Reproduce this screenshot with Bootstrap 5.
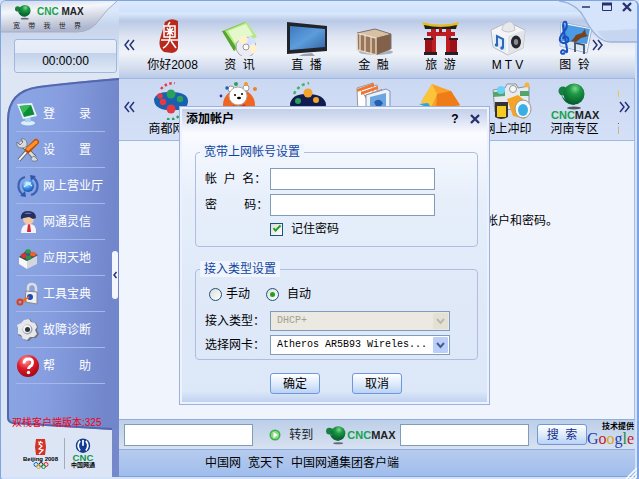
<!DOCTYPE html>
<html lang="zh-CN">
<head>
<meta charset="utf-8">
<meta name="viewport" content="width=device-width, initial-scale=1">
<title>CNCMAX 宽带我世界</title>
<link href="https://cdn.jsdelivr.net/npm/bootstrap@5.3.0/dist/css/bootstrap.min.css" rel="stylesheet">
<style>
body{font-family:"Liberation Sans","Noto Sans CJK SC",sans-serif;font-size:12px;line-height:18px;color:#000;background:#d3e1f7}
a{color:inherit;text-decoration:none}
.client{min-height:100vh;border:1px solid #7ea4e2;border-width:1px 2px 2px 1px;border-radius:6px 6px 4px 4px;padding:0 2px 2px 0;background:#d3e2f8;overflow:hidden}
.backdrop{position:absolute;inset:0;width:100%;height:100%}
.side{width:118px;background:linear-gradient(#dbe8fb 0,#dbe8fb 10px,#c6d4ec 24px,#dfe6f3 70px,#dce5f5 100%)}
.brand-box{height:36px;padding:3px 0 0 12px}
.brand-shape{position:absolute;left:0;top:0;width:118px;height:32px}
.wordmark{font-size:11px;line-height:14px;font-weight:700;color:#222}
.wordmark b{color:#16a34c}
.brand-box .wordmark{font-size:10px}
.slogan{font-size:7px;line-height:12px;color:#222;width:68px}
.timer{margin:2px 2px 5px 13px;height:34px;border:1px solid #9fb9de;border-radius:3px;background:linear-gradient(#e9eff9 0,#e3ebf7 40%,#c3d2ea 42%,#dfe8f6 100%);padding-top:12px}
.menu-box{padding:18px 14px 0 15px}
.menu-link{height:36px;gap:3px;color:#fff;border-bottom:1px solid #a5b8ea;white-space:nowrap}
.menu-link svg{width:24px;height:24px}
.version{font-size:10px;line-height:14px;color:#f00010;margin:32px -14px 0 -4px;white-space:nowrap}
.handle{position:absolute;right:1px;top:250px;width:6px;height:48px;border:0;border-radius:3px;background:#f3f6fe;padding:0}
.handle svg{display:block;width:6px;height:8px}
.partners{height:47px;padding:8px 0 0 22px;background:linear-gradient(90deg,transparent 111px,#7488ca 111px)}
.partner-row{width:72px}
.p-name{font-size:6px;line-height:6px;font-weight:700;white-space:nowrap}
.strip-a{height:77px;padding:17px 0 0 4px;background:linear-gradient(#dceafd 0,#cfe1fa 11px,#dceafd 12px,#b9c9e6 20px,#dfe5f2 36px,#f0f3f9 52px,#d6dfef 66px,#b9cae7 100%)}
.strip-b{height:63px;padding:3px 3px 0 4px;border:1px solid #9eb8e6;border-left:0;background:linear-gradient(#cbd8f2,#d4e0f6)}
.chev{width:12px;height:20px;border:0;background:none;padding:0;margin-top:17px}
.strip-b .chev{margin-top:15px}
.chev svg{display:block;width:12px;height:12px}
.tile{width:67px;text-align:center;white-space:nowrap}
.tile svg{display:block;width:40px;height:38px;margin:0 auto}
.strip-b .tile svg{width:54px;height:38px}
.end-a{margin-left:-16px;margin-right:32px}
.controls{position:absolute;right:0;top:0;width:80px;height:44px}
.controls .shape{position:absolute;inset:0}
.ctl{border:0;background:none;padding:0;width:12px;height:12px}
.ctl svg{display:block;width:12px;height:12px}
.canvas{background:#f0f4fd;border-right:1px solid #a9bdea;padding:71px 76px 0 0}
.searchbar{height:30px;padding:0 1px 0 5px;border-top:1px solid #8fadde;background:linear-gradient(#bdcfe9,#d7e1f0)}
.line-input{border:1px solid #7f9db9;border-radius:0;height:22px;min-width:0;padding:1px 6px;font-size:12px;background:#fff;box-shadow:none}
.line-input:focus{border-color:#7f9db9;box-shadow:none}
.go-btn{font-size:12px;line-height:18px}
.blue-btn{border:1px solid #6f98da;border-radius:3px;height:21px;width:50px;padding:0;font-size:12px;line-height:18px;color:#000;background:linear-gradient(#fff,#dce9fb 55%,#b9d2f6)}
.search-btn{color:#12318c}
.credit{width:47px;line-height:9px}
.credit-top{font-size:8px;font-weight:700;line-height:9px}
.google{font-family:"Liberation Serif",serif;font-size:16px;line-height:16px}
.g-blue{color:#1c3fae}.g-red{color:#c4202c}.g-gold{color:#d9a514}.g-green{color:#1c8a35}
.footer-bar{height:28px;gap:7px;padding:4px 0 0 86px;border-top:1px solid #8fadde;background:linear-gradient(#b7cbee,#9fbdec);border-bottom:1px solid #7f9fdc;white-space:nowrap}
.grip{position:absolute;right:0;bottom:0;width:12px;height:12px}
.dialog-win{position:absolute;left:179px;top:106px;width:311px;border:1px solid #9fb0e0;background:linear-gradient(#bfcbe8 0,#d3dcf0 10px,#fafbff 26px,#f6f9fe 36px,#e7effb 90px,#dfe9f8 180px,#dce7f8 284px,#bccff0 100%);box-shadow:inset 0 0 0 2px #edf3fd;padding-bottom:10px}
.win-head{height:24px;padding:0 8px 0 6px;font-weight:700}
.win-body{padding:13px 11px 0 15px}
.group{border:1px solid #b0bde2;border-radius:4px;padding:0 8px 0 9px;margin-bottom:14px}
.group legend{float:none;width:auto;font-size:12px;line-height:16px;color:#10459f;background:#f0f5fd;padding:0 4px;margin:0 0 0 -5px}
.field-label{width:65px;flex:none;white-space:nowrap}
.text-w{width:165px}
.pick-w{width:180px}
.tick{appearance:none;width:13px;height:13px;border:1px solid #1c5180;background:linear-gradient(135deg,#dcdcd7,#fff);margin:0;display:inline-grid;place-content:center}
.tick:checked::before{content:"";width:8px;height:4px;border:solid #21a121;border-width:0 0 2px 2px;transform:rotate(-45deg) translate(1px,-1px)}
.dot{border-radius:50%}
.dot:checked::before{width:5px;height:5px;border:0;border-radius:50%;background:#21a121;transform:none}
.pick{appearance:none;height:20px;border:1px solid #7f9db9;border-radius:0;background:#fff;padding:0 6px;font:10px/18px "Liberation Mono",monospace;color:#000;width:100%}
.pick:disabled{background:#ebe9e1;color:#a0a094;opacity:1}
.pick-arrow{position:absolute;right:2px;top:2px;width:15px;height:16px;pointer-events:none}
.actions{gap:32px;padding-left:75px;margin-top:-1px}
</style>
<script src="https://cdn.jsdelivr.net/npm/bootstrap@5.3.0/dist/js/bootstrap.bundle.min.js"></script>
</head>
<body>
<svg width="0" height="0" class="position-absolute" aria-hidden="true">
<defs>
<radialGradient id="gGreen" cx=".55" cy=".25" r=".75"><stop offset="0" stop-color="#7fd68e"/><stop offset=".35" stop-color="#1c9a45"/><stop offset="1" stop-color="#045a2c"/></radialGradient>
<radialGradient id="gRed" cx=".4" cy=".25" r=".8"><stop offset="0" stop-color="#ff9a9a"/><stop offset=".5" stop-color="#dd1a28"/><stop offset="1" stop-color="#9c0412"/></radialGradient>
<radialGradient id="gBlue" cx=".4" cy=".3" r=".8"><stop offset="0" stop-color="#d8f4ff"/><stop offset=".5" stop-color="#3a90e8"/><stop offset="1" stop-color="#123e9c"/></radialGradient>
<linearGradient id="gTv" x2="1" y2="1"><stop offset="0" stop-color="#3f78c0"/><stop offset=".5" stop-color="#5d9ddb"/><stop offset="1" stop-color="#3467a8"/></linearGradient>
<linearGradient id="gPanel" x2="1" y2=".15"><stop offset="0" stop-color="#8ba7e5"/><stop offset=".45" stop-color="#879fe0"/><stop offset="1" stop-color="#7186cb"/></linearGradient>
<linearGradient id="gBrand" x2=".3" y2="1"><stop offset="0" stop-color="#cdd6e8"/><stop offset=".35" stop-color="#f4f6fa"/><stop offset="1" stop-color="#aeb5cc"/></linearGradient>
<symbol id="ball" viewBox="0 0 20 18"><circle cx="4" cy="5.500" r="3" fill="#17803e"/><circle cx="12" cy="7.500" r="6.500" fill="url(#gGreen)"/><path d="M4 7q3 5 8 4l5-1-4 4q-5 1-8-4z" fill="#0a6a34"/><ellipse cx="12" cy="16.500" rx="4.500" ry="1" fill="#667"/></symbol>
<symbol id="left2" viewBox="0 0 12 12"><path d="M6 1L2 6l4 5M11 1L7 6l4 5" fill="none" stroke="#26347c" stroke-width="1.500"/></symbol>
<symbol id="right2" viewBox="0 0 12 12"><path d="M1 1l4 5-4 5M6 1l4 5-4 5" fill="none" stroke="#26347c" stroke-width="1.500"/></symbol>
<symbol id="close" viewBox="0 0 12 12"><path d="M2 2l8 8M10 2l-8 8" stroke="#26306e" stroke-width="2.300"/></symbol>
</defs>
</svg>

<div class="client d-flex position-relative">
  <aside class="side d-flex flex-column flex-shrink-0 position-relative">
    <div class="brand-box position-relative">
      <svg class="brand-shape" viewBox="0 0 118 32"><path d="M0 0H116Q106 8 98 19Q90 31 76 31H0z" fill="url(#gBrand)"/><path d="M116 0Q106 8 98 19Q90 31 76 31H0" fill="none" stroke="#a5adc8"/></svg>
      <div class="position-relative d-flex align-items-center gap-1">
        <svg width="20" height="16"><use href="#ball"/></svg>
        <span class="wordmark"><b>CNC</b> MAX</span>
      </div>
      <div class="slogan position-relative d-flex justify-content-between"><span>宽</span><span>带</span><span>我</span><span>世</span><span>界</span></div>
    </div>
    <div class="timer text-center">00:00:00</div>
    <nav class="menu-box position-relative flex-grow-1">
      <svg class="backdrop" viewBox="0 0 118 352" preserveAspectRatio="none"><path d="M6 340V42Q7 12 38 8Q70 4 118 0V352H111L12 346Q6 345 6 340z" fill="url(#gPanel)"/><path d="M118 1Q70 5 38 9Q7 13 7 42V339Q7 344 12 345L111 351" fill="none" stroke="#5466ae" stroke-width="2"/></svg>
      <div class="position-relative">
        <a class="menu-link d-flex align-items-center" href="#"><svg viewBox="0 0 24 24"><ellipse cx="12" cy="21" rx="7" ry="2.500" fill="#d9f0fb"/><path d="M9 14l5-1 1 7H9z" fill="#a9d3ea"/><path d="M1 2l15-1 5 13-14 3z" fill="#e6f1fb"/><path d="M3.500 4L15 3l3.500 9.500L8 15z" fill="#0b8d34"/><path d="M3.500 4L15 3l-8 9z" fill="#36b957"/></svg>登　　录</a>
        <a class="menu-link d-flex align-items-center" href="#"><svg viewBox="0 0 24 24"><path d="M4 4l15 16" stroke="#555" stroke-width="4.500"/><path d="M4 4l15 16" stroke="#ddd" stroke-width="3"/><path d="M1 4l3 3 3-3-2-3q5-1 6 4t-5 5-5-6M22 22l-4-4-3 2q0 4 5 3z" fill="#d6d9dd" stroke="#555" stroke-width=".6"/><path d="M3 22L12 12" stroke="#555" stroke-width="3.500"/><path d="M3 22L12 12" stroke="#f0f0f0" stroke-width="2"/><path d="M12 12L20 4" stroke="#bb4a00" stroke-width="6" stroke-linecap="round"/><path d="M12 11L20 4" stroke="#ff922b" stroke-width="3.500" stroke-linecap="round"/></svg>设　　置</a>
        <a class="menu-link d-flex align-items-center" href="#"><svg viewBox="0 0 24 24"><circle cx="12" cy="12" r="6" fill="url(#gBlue)"/><path d="M9 3Q2 5 2.500 13q.5 5 5 8M15 21q7-2 6.500-10-.5-5-5-8" fill="none" stroke="#3a62b4" stroke-width="2.200"/><path d="M4 22l6 1-1-6zM20 2l-6-1 1 6z" fill="#2f58ad"/><path d="M8 13q4-5 8-1M10 9l5 0" fill="none" stroke="#c8eeff" stroke-width="1.300"/></svg>网上营业厅</a>
        <a class="menu-link d-flex align-items-center" href="#"><svg viewBox="0 0 24 24"><path d="M5 23q0-9 8-9t7 9z" fill="#f3f3f8"/><path d="M12 14h2l1 8h-4z" fill="#d72a33"/><circle cx="12.500" cy="9" r="5.500" fill="#f3c6a4"/><path d="M5 9Q4 1 12 1t8 7l-3 1-4-2-5 1z" fill="#26305e"/><path d="M8 4q4-3 8 0z" fill="#6576b8"/></svg>网通灵信</a>
        <a class="menu-link d-flex align-items-center" href="#"><svg viewBox="0 0 24 24"><path d="M3 11l8 4v8l-8-5z" fill="#f7f7f7"/><path d="M11 15l10-5v8l-10 5z" fill="#d3d6dc"/><path d="M3 11l8-7 11 5-11 6z" fill="#4b4b50"/><ellipse cx="8" cy="9.500" rx="3" ry="2.300" fill="#d9342b"/><ellipse cx="12" cy="5.500" rx="2.800" ry="2.300" fill="#2a9d3d"/><ellipse cx="12.500" cy="11.500" rx="3" ry="2.300" fill="#2f8e44"/><ellipse cx="17" cy="8" rx="3" ry="2.300" fill="#e8642c"/><circle cx="12" cy="8.500" r="1.500" fill="#2f58c4"/></svg>应用天地</a>
        <a class="menu-link d-flex align-items-center" href="#"><svg viewBox="0 0 24 24"><path d="M12 10V6q0-4 4-4t4 5v3" fill="none" stroke="#ddd" stroke-width="2.500"/><path d="M10 9l11 1v12l-12-2z" fill="#edf0f5" stroke="#888"/><circle cx="14" cy="15" r="3" fill="#234ab4"/><path d="M13 15l-7 4M9 17l1 3" stroke="#ef6a1e" stroke-width="2"/><circle cx="4" cy="20" r="2.500" fill="none" stroke="#df3f16" stroke-width="2"/></svg>工具宝典</a>
        <a class="menu-link d-flex align-items-center" href="#"><svg viewBox="0 0 24 24"><path d="M9 2l5-1 2 3 4 1 2 4-1 3 2 4-3 4-4 0-3 3-5-1-2-3-4-2 0-5-1-4 4-3z" fill="#71757e"/><path d="M8 2l5-1 2 3 4 1 2 4-2 3 2 4-3 3-4 0-3 3-4-1-2-4-3-1 0-5-1-4 4-2z" fill="#e6e8eb"/><circle cx="11.500" cy="11.500" r="5" fill="#9ea3ad"/><circle cx="11" cy="11" r="4" fill="#f4f4f6"/><circle cx="11.500" cy="11.500" r="2.500" fill="#30343c"/></svg>故障诊断</a>
        <a class="menu-link d-flex align-items-center" href="#"><svg viewBox="0 0 24 24"><circle cx="12" cy="12" r="11" fill="url(#gRed)"/><path d="M8 9.500q0-4.500 4.500-4.500t4 4q0 2-2.500 3.500-1.500 1-1.500 2.500" fill="none" stroke="#fff" stroke-width="2.800"/><circle cx="12.500" cy="18.500" r="1.700" fill="#fff"/></svg>帮　　助</a>
        <div class="version">双栈客户端版本:325</div>
      </div>
    </nav>
    <div class="partners">
      <div class="partner-row d-flex justify-content-between">
        <div class="d-flex flex-column align-items-center"><svg width="18" height="18" viewBox="0 0 18 18"><path d="M4 1h9l1 8-1 8H4L3 9z" fill="#d53125"/><path d="M9 3L7 6l3 2-3 3 4 1-4 4M6 4l5 1" fill="none" stroke="#fff" stroke-width="1.200"/></svg><span class="p-name">Beijing 2008</span><svg width="16" height="7" viewBox="0 0 16 7" fill="none"><circle cx="3" cy="2.500" r="2" stroke="#16c"/><circle cx="8" cy="2.500" r="2" stroke="#222"/><circle cx="13" cy="2.500" r="2" stroke="#d22"/><circle cx="5.500" cy="4.500" r="2" stroke="#da2"/><circle cx="10.500" cy="4.500" r="2" stroke="#194"/></svg></div>
        <div class="vr"></div>
        <div class="d-flex flex-column align-items-center"><svg width="22" height="24" viewBox="0 0 22 25"><circle cx="11" cy="8" r="7.500" fill="#143c8e"/><path d="M8 3Q4 8 8 13M14 3q4 5 0 10M11 2v6" stroke="#fff" stroke-width="1.800" fill="none"/><text x="11" y="24" text-anchor="middle" font-family="Liberation Sans, sans-serif" font-size="10" font-weight="700" fill="#12964a">CNC</text></svg><span class="p-name">中国网通</span></div>
      </div>
    </div>
    <button class="handle" type="button" aria-label="收起"><svg viewBox="0 0 6 8"><path d="M4.500 1L2 4l2.500 3" fill="none" stroke="#26347c" stroke-width="1.500"/></svg></button>
  </aside>

  <main class="d-flex flex-column flex-grow-1 overflow-hidden position-relative">
    <div class="strip-a d-flex">
      <button class="chev me-1" type="button" aria-label="向左"><svg><use href="#left2"/></svg></button>
      <div class="d-flex flex-grow-1 justify-content-between">
        <a class="tile" href="#"><svg viewBox="0 0 40 38"><path d="M12 4Q18-1 25 3L25 20l0 9q0 5-6 6l-8-1q-6-4-4-13z" fill="#b92a1c"/><path d="M17 4l-2 3M11 8h11v11H11zM17 8v11M12 13.500h9M14 10l6 7M20 10l-6 7M8 22h17M17 19q-1 8-7 11M18 23l5 7" fill="none" stroke="#fff" stroke-width="1.500"/></svg>你好2008</a>
        <a class="tile" href="#"><svg viewBox="0 0 40 38"><path d="M2 13L25 4l11 14-22 15z" fill="#7fc94c"/><path d="M5 13L27 4l10 15-21 10z" fill="#b5e883"/><path d="M8 13L26 6l7 11-18 8z" fill="#e4f9cb"/><path d="M2 13l3 0 11 16-2 4z" fill="#56a332"/><circle cx="26" cy="29" r="10" fill="#ececf4" stroke="#aaa"/><path d="M26 29L18 22q4-5 9-4zM26 29l8 7q4-5 3-9z" fill="#fff1c8"/><path d="M26 29l10-5q-2-5-7-6z" fill="#d5e2ff"/><circle cx="26" cy="29" r="3" fill="#fff" stroke="#999"/></svg>资&nbsp; 讯</a>
        <a class="tile" href="#"><svg viewBox="0 0 40 38"><path d="M0 4l40 4v25L0 36z" fill="#20242b"/><path d="M3 8l35 3v18L3 32z" fill="url(#gTv)"/><path d="M12 38h16l-3-3-9 1z" fill="#9da3b0"/></svg>直&nbsp; 播</a>
        <a class="tile" href="#"><svg viewBox="0 0 40 38"><ellipse cx="22" cy="34" rx="17" ry="3" fill="#aab2c2"/><path d="M3 15l18-4 16 5v15l-15 6-18-4z" fill="#9b7656"/><path d="M3 15l18-4 16 5-15 4z" fill="#d9c0a2"/><path d="M22 20l15-4v15l-15 6z" fill="#82614a"/><path d="M6 15v17M11 17v17M17 18v18M3 15v17l19 5V20z" fill="none" stroke="#e7ddd0" stroke-width="1.300"/><path d="M3 15l18-4 16 5v15" fill="none" stroke="#777"/></svg>金&nbsp; 融</a>
        <a class="tile" href="#"><svg viewBox="0 0 40 38"><path d="M1 4q19 5 37 0l-2 5H3z" fill="#e5bd18"/><path d="M3 7q17 4 33 0l-1 4H4z" fill="#202022"/><path d="M10 11h5v23h-5zM25 11h5v23h-5zM6 14h28v4H6z" fill="#bd1c20"/><path d="M4 22h7v13H4zM29 22h7v13h-7zM18 10h3v5h-3z" fill="#9c1118"/><path d="M3 34h13v3H3zM24 34h13v3H24zM3 20h9v2H3zM28 20h9v2h-9z" fill="#2a1c22"/></svg>旅&nbsp; 游</a>
        <a class="tile" href="#"><svg viewBox="0 0 40 38"><path d="M3 12L20 4l17 8-2 18-15 7-15-8z" fill="#f5f5f7" stroke="#b4b8c0"/><path d="M20 18l17-6-2 18-15 7z" fill="#e2e4e8"/><ellipse cx="28" cy="24" rx="5" ry="6.500" fill="#25272c"/><ellipse cx="28" cy="24" rx="2.200" ry="3" fill="#868b96"/><path d="M14 12q0-6 6-8t7 8q-7 4-13 0z" fill="#e8e9ed" stroke="#c3c6cc"/><path d="M5 16l13 5v13L7 28z" fill="#dcebfa"/><path d="M9 27V18l6 3v9" fill="none" stroke="#2b68bc" stroke-width="2"/><circle cx="8.500" cy="27" r="1.800" fill="#2b68bc"/><circle cx="14" cy="30" r="1.800" fill="#2b68bc"/></svg>M T V</a>
        <a class="tile" href="#"><svg viewBox="0 0 40 38"><path d="M6 4l31 6-5 25-27-7z" fill="#f8fbff" stroke="#9ab5d8"/><path d="M8 6l27 5-3 15-26-3z" fill="#4a9ae4"/><path d="M7 23l25 4-1 6-25-5z" fill="#d8e7f1"/><path d="M21 17l6-2 3-4 1 5 2 2-7 2-5 4-5-1 3-3z" fill="#7a4317"/><path d="M10 35q-4 2-4-1 1-3 4-1 3 3 2-2L8 8q0-5 3-4 3 5-4 12-5 7 1 9 7 0 5-5-4-4-5 1" fill="none" stroke="#1c4fc0" stroke-width="2"/><path d="M20 34V25l9 2v9" fill="none" stroke="#3b4560" stroke-width="1.700"/></svg>图&nbsp; 铃</a>
      </div>
      <button class="chev end-a" type="button" aria-label="向右"><svg><use href="#right2"/></svg></button>
    </div>
    <div class="strip-b d-flex">
      <button class="chev me-1" type="button" aria-label="向左"><svg><use href="#left2"/></svg></button>
      <div class="d-flex flex-grow-1 overflow-hidden">
        <a class="tile flex-shrink-0" href="#"><svg viewBox="0 0 54 38"><path d="M8 17q3-8 16-7 18 0 18 9 0 10-15 9-19 1-19-11z" fill="#1960ae"/><circle cx="25" cy="12" r="4.500" fill="#2ba05a"/><circle cx="34" cy="17" r="3.200" fill="#2ba05a"/><circle cx="14" cy="14" r="2.800" fill="#e73943"/><circle cx="17" cy="20" r="3.200" fill="#e73943"/><circle cx="25" cy="27" r="4.500" fill="#e73943"/><path d="M15 7q5-6 14-6" fill="none" stroke="#e73943" stroke-width="2.500" stroke-dasharray="2.500 2.500"/><path d="M21 37q8 2 14-5" fill="none" stroke="#2ba05a" stroke-width="2.500" stroke-dasharray="2.500 2.500"/></svg>商都网景</a>
        <a class="tile flex-shrink-0" href="#"><svg viewBox="0 0 54 38"><circle cx="26" cy="23" r="16" fill="#ef6621"/><path d="M17 38q-2-12 9-14 11 2 9 14z" fill="#fff"/><circle cx="18" cy="7" r="3" fill="#fff" stroke="#999"/><circle cx="33" cy="6" r="3" fill="#fff" stroke="#999"/><ellipse cx="25" cy="14" rx="9" ry="9" fill="#fff" stroke="#aaa"/><circle cx="22" cy="13" r="1"/><circle cx="29" cy="12" r="1"/><ellipse cx="26" cy="16" rx="2" ry="1.300"/><path d="M20 23q6 3 12-1l2 9-4-4-10-1z" fill="#de262c"/><circle cx="23" cy="2" r="2" fill="#2ba05a"/><circle cx="33" cy="2" r="2" fill="#f59a22"/><circle cx="14" cy="6" r="1.700" fill="#1960ae"/><circle cx="42" cy="7" r="2" fill="#f58022"/><circle cx="8" cy="14" r="1.400" fill="#4a2b9c"/></svg>奥运频道</a>
        <a class="tile flex-shrink-0" href="#"><svg viewBox="0 0 54 38"><path d="M10 22q2-11 18-10 16 0 18 10 0 14-18 14T10 22z" fill="#111c50"/><circle cx="28" cy="11" r="4.500" fill="#f5a32a"/><circle cx="18" cy="19" r="3" fill="#2ba05a"/><circle cx="36" cy="18" r="3" fill="#f5a32a"/><path d="M14 12q4-9 15-11" fill="none" stroke="#45b16a" stroke-width="2.500" stroke-dasharray="3 3"/></svg>星空影院</a>
        <a class="tile flex-shrink-0" href="#"><svg viewBox="0 0 54 38"><path d="M10 6l16-5v34l-15-1zM14 8l16-5v30z" fill="#fff" stroke="#999"/><path d="M10 7l17-6v3l-17 6zM14 10l17-6v3l-17 6zM18 13l17-6v3l-17 6z" fill="#f37532"/><path d="M19 13l20-6 4 2v28H19z" fill="#eef3fb" stroke="#8093b5"/><path d="M23 15l16-4v22H23z" fill="#6ca5df"/><path d="M27 20q5-5 9 1l-5 7z" fill="#245fae"/><path d="M32 24l12 2-4 6z" fill="#f5a32a"/></svg>电子相册</a>
        <a class="tile flex-shrink-0" href="#"><svg viewBox="0 0 54 38"><path d="M7 20L18 2l19 7 9 14-20 13z" fill="#f9a12a"/><path d="M7 20L18 2l5 10-7 16z" fill="#fbc43b"/><path d="M23 12l14-3 9 14-24 4z" fill="#ee7d19"/><path d="M5 22l9-1 5 7z" fill="#28a7dc"/></svg>生活天地</a>
        <a class="tile flex-shrink-0" href="#"><svg viewBox="0 0 54 38"><path d="M12 8l12-2 2-4h9l2 4 11-2v20l-34 6z" fill="#e7eaee" stroke="#8b929e"/><path d="M12 10l12-1v5l-12 1zM39 9h9v5h-9z" fill="#55a46b"/><path d="M26 17l11-4 11 9-4 15-12-3z" fill="#f6a425"/><ellipse cx="42" cy="27" rx="8" ry="9" fill="#f4f6f8" stroke="#999"/><ellipse cx="42" cy="28" rx="5" ry="6" fill="#3baee6"/><circle cx="20" cy="8" r="4" fill="#6bd2f5"/><circle cx="32" cy="7" r="3.500" fill="#f8f9fa" stroke="#999"/><circle cx="46" cy="3" r="2.500" fill="#f5b33a"/><path d="M14 20h13v15q-7 4-13 0z" fill="#343437"/><path d="M16 24h9v11h-9z" fill="#f5cb20"/></svg>网上冲印</a>
        <a class="tile flex-shrink-0" href="#"><svg viewBox="0 0 54 38"><circle cx="15" cy="9" r="4.500" fill="#17803e"/><path d="M13 12q4 8 12 8l9-3-8 6q-10 0-13-11z" fill="#0a6a34"/><circle cx="26" cy="12" r="10.500" fill="url(#gGreen)"/><ellipse cx="26" cy="26" rx="7" ry="1.500" fill="#556"/><text x="3" y="37" font-family="Liberation Sans, sans-serif" font-size="11" font-weight="700" fill="#16a34c">CNC<tspan fill="#222">MAX</tspan></text></svg>河南专区</a>
        <a class="tile flex-shrink-0" href="#"><svg viewBox="0 0 54 38"><circle cx="11" cy="12" r="8" fill="#f6c12c"/><path d="M5 24q6-11 12 0v8H5z" fill="#26a5d9"/></svg>商务中心</a>
      </div>
      <button class="chev" type="button" aria-label="向右"><svg><use href="#right2"/></svg></button>
    </div>
    <section class="canvas flex-grow-1 text-end">请输入您的帐户和密码。</section>
    <form class="searchbar d-flex align-items-center" onsubmit="return false">
      <input class="line-input form-control flex-fill w-25" type="text" aria-label="网址">
      <button class="go-btn btn p-0 border-0 d-flex align-items-center ms-3 me-2 text-nowrap" type="submit"><svg class="me-2" width="12" height="12" viewBox="0 0 12 12"><circle cx="6" cy="6" r="5.500" fill="#3cae4b"/><circle cx="6" cy="6" r="4" fill="#8bd981"/><path d="M4.500 3L9 6 4.500 9z" fill="#fff"/></svg>转到</button>
      <svg class="ms-1 flex-shrink-0" width="22" height="20"><use href="#ball"/></svg><span class="wordmark me-1"><b>CNC</b>MAX</span>
      <input class="line-input form-control flex-fill w-25" type="text" aria-label="搜索内容">
      <button class="blue-btn search-btn flex-shrink-0 ms-2" type="submit">搜&nbsp; 索</button>
      <div class="credit flex-shrink-0"><div class="credit-top text-end">技术提供</div><div class="google"><span class="g-blue">G</span><span class="g-red">o</span><span class="g-gold">o</span><span class="g-blue">g</span><span class="g-green">l</span><span class="g-red">e</span></div></div>
    </form>
    <footer class="footer-bar d-flex"><a href="#">中国网</a><a href="#">宽天下</a><a href="#">中国网通集团客户端</a></footer>
  </main>

  <div class="controls">
    <svg class="shape" width="80" height="44" viewBox="0 0 80 44"><path d="M6 0q14 2 22 18 12 23 26 23h26V0z" fill="#d5e4fa"/><path d="M40 30q8 11 16 11h24V28z" fill="#bccbe9" opacity=".6"/><path d="M2 0q18 2 26 18 12 23 26 23h26" fill="none" stroke="#9db2da" stroke-width="1.500"/></svg>
    <div class="position-relative d-flex justify-content-end gap-2 pe-1">
      <button class="ctl" type="button" aria-label="最小化"><svg viewBox="0 0 12 12"><path d="M1 6h8" stroke="#26306e" stroke-width="1.500"/></svg></button>
      <button class="ctl" type="button" aria-label="最大化"><svg viewBox="0 0 12 12"><path d="M1.500 2.500h9v7h-9z" fill="none" stroke="#26306e"/><path d="M1 3h10" stroke="#26306e" stroke-width="3"/></svg></button>
      <button class="ctl" type="button" aria-label="关闭"><svg><use href="#close"/></svg></button>
    </div>
  </div>
  <svg class="grip" viewBox="0 0 12 12"><path d="M1 12L12 1M5 12l7-7M9 12l3-3" stroke="#fff" stroke-width="1.500"/></svg>
</div>

<div class="dialog-win" role="dialog" aria-labelledby="dlgTitle">
  <div class="win-head d-flex align-items-center"><span id="dlgTitle" class="me-auto">添加帐户</span>
    <button class="ctl me-2 fw-bold lh-1" type="button" aria-label="帮助">?</button>
    <button class="ctl" type="button" aria-label="关闭"><svg><use href="#close"/></svg></button>
  </div>
  <form class="win-body" onsubmit="return false">
    <fieldset class="group">
      <legend>宽带上网帐号设置</legend>
      <div class="d-flex align-items-center mt-2"><label class="field-label" for="acc">帐&nbsp; 户&nbsp; 名：</label><input id="acc" class="line-input form-control text-w" type="text" autofocus></div>
      <div class="d-flex align-items-center mt-1"><label class="field-label" for="pwd">密　　&nbsp;码：</label><input id="pwd" class="line-input form-control text-w" type="password"></div>
      <div class="d-flex align-items-center my-1 pb-1"><span class="field-label"></span><input id="keep" class="tick" type="checkbox" checked><label class="ps-1 ms-1" for="keep">记住密码</label></div>
    </fieldset>
    <fieldset class="group">
      <legend>接入类型设置</legend>
      <div class="d-flex align-items-center mt-2 ps-1"><input id="man" class="tick dot" type="radio" name="mode"><label class="ps-1 me-3" for="man">手动</label><input id="auto" class="tick dot" type="radio" name="mode" checked><label class="ps-2" for="auto">自动</label></div>
      <div class="d-flex align-items-center mt-2"><label class="field-label" for="kind">接入类型：</label><div class="pick-w position-relative d-flex"><select id="kind" class="pick" disabled><option>DHCP+</option></select><svg class="pick-arrow" viewBox="0 0 15 16"><rect width="15" height="16" rx="1" fill="#e3e1d6"/><path d="M4 6l3.500 4L11 6" fill="none" stroke="#bcbaac" stroke-width="2"/></svg></div></div>
      <div class="d-flex align-items-center mt-1 mb-1"><label class="field-label" for="nic">选择网卡：</label><div class="pick-w position-relative d-flex"><select id="nic" class="pick"><option>Atheros AR5B93 Wireles...</option></select><svg class="pick-arrow" viewBox="0 0 15 16"><rect width="15" height="16" rx="1" fill="#bccffa"/><path d="M4 6l3.500 4L11 6" fill="none" stroke="#44608c" stroke-width="2"/></svg></div></div>
    </fieldset>
    <div class="actions d-flex"><button class="blue-btn" type="submit">确定</button><button class="blue-btn" type="button">取消</button></div>
  </form>
</div>
</body>
</html>
